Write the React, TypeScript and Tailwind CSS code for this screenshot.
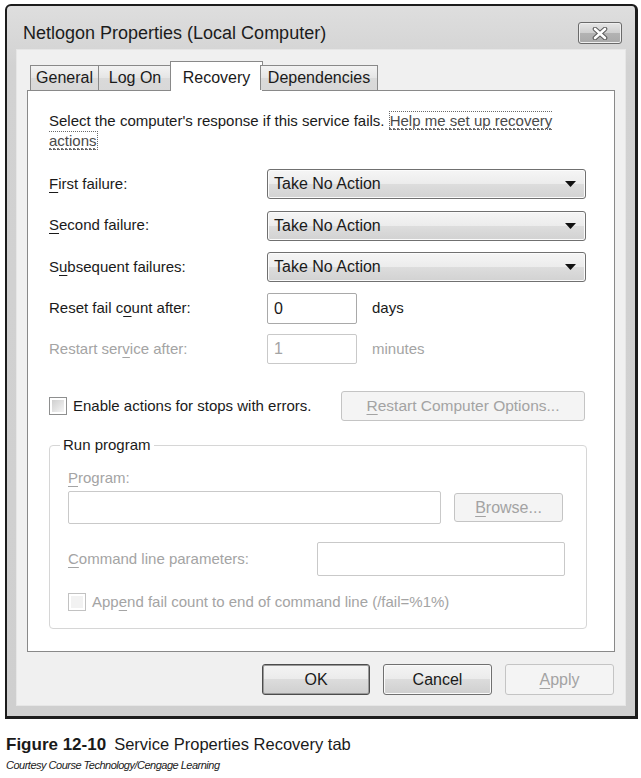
import React from 'react';

const U = ({ children }: { children: React.ReactNode }) => (
  <span className="underline decoration-1 underline-offset-[3px]">{children}</span>
);

const ComboBox = () => (
  <div className="flex h-[30px] w-[319px] items-center justify-between rounded-[3px] border border-[#707070] bg-[linear-gradient(#f5f5f5,#ececec_50%,#dddddd_50%,#d2d2d2)] pl-[6px] pr-[9px] text-[16px] text-[#1a1a1a] shadow-[inset_0_0_0_1px_#fbfbfb]">
    <span>Take No Action</span>
    <svg width="11" height="6" viewBox="0 0 11 6">
      <path d="M0 0h11L5.5 6z" fill="#111" />
    </svg>
  </div>
);

const TextBox = ({ value, disabled, className }: { value?: string; disabled?: boolean; className: string }) => (
  <div
    className={`flex items-center rounded-[2px] border bg-white pl-[6px] text-[16px] ${
      disabled ? 'border-[#c9c9c9] text-[#a4a4a4]' : 'border-[#a9a9a9] text-[#1a1a1a]'
    } ${className}`}
  >
    {value}
  </div>
);

const CheckBox = ({ disabled }: { disabled?: boolean }) => (
  <div className={`h-[18px] w-[18px] shrink-0 border bg-white p-[2px] ${disabled ? 'border-[#c2c2c2]' : 'border-[#8e8f8f]'}`}>
    <div className={`h-full w-full ${disabled ? 'bg-[#f2f2f2]' : 'bg-[linear-gradient(135deg,#cfcfcf,#f5f5f5)]'}`} />
  </div>
);

const Button = ({
  children,
  disabled,
  isDefault,
  className,
}: {
  children: React.ReactNode;
  disabled?: boolean;
  isDefault?: boolean;
  className: string;
}) => (
  <div
    className={`flex items-center justify-center rounded-[3px] border ${
      disabled
        ? 'border-[#c4c4c4] bg-[#f4f4f4] text-[#a3a3a3]'
        : isDefault
          ? 'border-[#4c4c4c] bg-[linear-gradient(#f4f4f4,#ebebeb_50%,#dcdcdc_50%,#cfcfcf)] text-[#1a1a1a] shadow-[inset_0_0_0_1px_#9a9a9a]'
          : 'border-[#707070] bg-[linear-gradient(#f4f4f4,#ebebeb_50%,#dcdcdc_50%,#cfcfcf)] text-[#1a1a1a] shadow-[inset_0_0_0_1px_#fafafa]'
    } ${className}`}
  >
    {children}
  </div>
);

const tabs = [
  { label: 'General', w: 'w-[69px]' },
  { label: 'Log On', w: 'w-[74px]' },
  { label: 'Recovery', w: 'w-[93px]', active: true },
  { label: 'Dependencies', w: 'w-[118px]' },
];

export default function App() {
  return (
    <div className="h-[778px] w-[641px] overflow-hidden bg-white font-['Liberation_Sans',Arial,sans-serif]">
      {/* window */}
      <div className="ml-[5px] mt-[4px] flex h-[715px] w-[633px] flex-col rounded-t-[6px] border-2 border-b-[3px] border-r-[3px] border-[#1c1c1c] bg-[linear-gradient(#dedede,#d2d2d2_60px,#cfcfcf)] px-[10px]">
        {/* title bar */}
        <div className="flex h-[44px] shrink-0 items-end justify-between pb-[6px] pl-[6px] pr-[3px]">
          <span className="text-[18px] leading-[22px] text-[#1c1c1c]">Netlogon Properties (Local Computer)</span>
          <div className="flex h-[22px] w-[44px] items-center justify-center rounded-[3px] border border-[#6a6a6a] bg-[linear-gradient(#e6e6e6,#cfcfcf_50%,#b3b3b3_50%,#a9a9a9)] shadow-[inset_0_0_0_1px_#efefef]">
            <svg width="16" height="13" viewBox="0 0 16 13">
              <path d="M3 2l10 9M13 2L3 11" stroke="#5a5a5a" strokeWidth="4.6" strokeLinecap="round" />
              <path d="M3 2l10 9M13 2L3 11" stroke="#ffffff" strokeWidth="2.6" strokeLinecap="round" />
            </svg>
          </div>
        </div>

        {/* client area */}
        <div className="flex h-[655px] shrink-0 flex-col bg-[#f0f0f0] px-[10px] pt-[11px] shadow-[0_0_0_1px_#e6e6e6]">
          {/* tabs */}
          <div className="relative z-10 -mb-px ml-[3px] flex h-[30px] items-end">
            {tabs.map((t) =>
              t.active ? (
                <div
                  key={t.label}
                  className={`-mx-[2px] flex h-[30px] items-start justify-center border border-b-0 border-[#898989] bg-white pt-[4px] text-[16px] text-[#1a1a1a] ${t.w}`}
                >
                  {t.label}
                </div>
              ) : (
                <div
                  key={t.label}
                  className={`-ml-px mb-px flex h-[25px] items-center justify-center border border-b-0 border-[#898989] bg-[linear-gradient(#f3f3f3,#e5e5e5_50%,#dadada_50%,#d8d8d8)] text-[16px] text-[#1a1a1a] first:ml-0 ${t.w}`}
                >
                  {t.label}
                </div>
              ),
            )}
          </div>

          {/* tab panel */}
          <div className="h-[562px] shrink-0 border border-[#898989] bg-white pl-[21px] pr-[27px] pt-[20px] text-[15px] text-[#1a1a1a]">
            <p className="leading-[20px]">
              Select the computer&apos;s response if this service fails.{' '}
              <span className="border border-dotted border-[#6a6a6a] text-[#4a4a4a] underline decoration-dotted underline-offset-[3px]">
                Help me set up recovery
                <br />
                actions
              </span>
            </p>

            <div className="mt-[18px] grid grid-cols-[218px_auto] items-center gap-y-[11px]">
              <span>
                <U>F</U>irst failure:
              </span>
              <ComboBox />
              <span>
                <U>S</U>econd failure:
              </span>
              <div className="pt-px">
                <ComboBox />
              </div>
              <span>
                S<U>u</U>bsequent failures:
              </span>
              <ComboBox />
              <span>
                Reset fail c<U>o</U>unt after:
              </span>
              <div className="flex items-center">
                <TextBox value="0" className="h-[31px] w-[90px]" />
                <span className="ml-[15px]">days</span>
              </div>
              <span className="text-[#a4a4a4]">
                Restart ser<U>v</U>ice after:
              </span>
              <div className="-mt-px flex items-center">
                <TextBox value="1" disabled className="h-[30px] w-[90px]" />
                <span className="ml-[15px] text-[#a4a4a4]">minutes</span>
              </div>
            </div>

            <div className="mt-[27px] flex h-[30px] items-center">
              <CheckBox />
              <span className="ml-[6px]">Enable actions for stops with errors.</span>
              <Button disabled className="ml-auto mr-[2px] h-[30px] w-[244px] text-[15.5px]">
                <span>
                  <U>R</U>estart Computer Options...
                </span>
              </Button>
            </div>

            <fieldset className="mt-[15px] h-[193px] rounded-[4px] border border-[#d6d6d6] pl-[18px] pr-[20px]">
              <legend className="-ml-[8px] px-[3px] leading-[18px] text-[#1a1a1a]">Run program</legend>
              <div className="mt-[14px] leading-[20px] text-[#a4a4a4]">
                <U>P</U>rogram:
              </div>
              <div className="mt-[3px] flex items-center">
                <TextBox className="h-[33px] w-[373px]" disabled />
                <Button disabled className="ml-[13px] h-[29px] w-[109px] text-[16px]">
                  <span>
                    <U>B</U>rowse...
                  </span>
                </Button>
              </div>
              <div className="mt-[18px] flex items-center">
                <span className="w-[249px] text-[#a4a4a4]">
                  <U>C</U>ommand line parameters:
                </span>
                <TextBox className="h-[34px] w-[248px]" disabled />
              </div>
              <div className="mt-[15px] flex items-center">
                <CheckBox disabled />
                <span className="ml-[6px] text-[#a4a4a4]">
                  App<U>e</U>nd fail count to end of command line (/fail=%1%)
                </span>
              </div>
            </fieldset>
          </div>

          {/* dialog buttons */}
          <div className="mt-[12px] flex justify-end gap-[13px] pr-px text-[16px]">
            <Button isDefault className="h-[31px] w-[108px]">
              OK
            </Button>
            <Button className="h-[31px] w-[109px]">Cancel</Button>
            <Button disabled className="h-[31px] w-[109px]">
              <span>
                <U>A</U>pply
              </span>
            </Button>
          </div>
        </div>
      </div>

      {/* caption */}
      <div className="ml-[6px] mt-[14px] text-[16.5px] leading-[22px] text-[#1a1a1a]">
        <span className="text-[17px] font-bold">Figure 12-10</span>
        <span className="ml-[8px]">Service Properties Recovery tab</span>
      </div>
      <div className="ml-[6px] mt-[2px] text-[11px] italic leading-[14px] tracking-[-0.5px] text-[#1a1a1a]">
        Courtesy Course Technology/Cengage Learning
      </div>
    </div>
  );
}
